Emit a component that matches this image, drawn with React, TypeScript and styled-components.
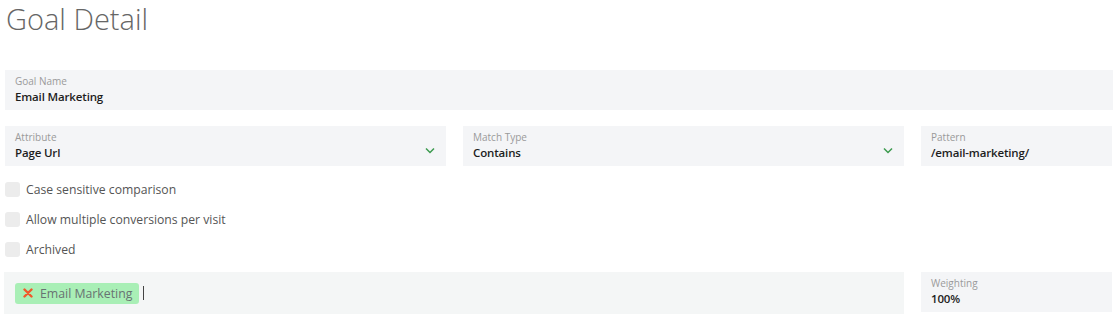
import styled, { createGlobalStyle } from 'styled-components'

const GlobalStyle = createGlobalStyle`
  body {
    margin: 0;
    background: #ffffff;
    font-family: "Open Sans", "Noto Sans", sans-serif;
  }
`

const Page = styled.div`
  padding: 0 0 0 5px;
  width: 1108px;
`

const Title = styled.h1`
  margin: 0;
  padding: 0 0 0 1px;
  font-size: 29px;
  font-weight: 300;
  line-height: 38px;
  color: #666666;
  height: 70px;
`

const Field = styled.div`
  background: #f4f5f7;
  height: 40px;
  padding: 5px 10px 0;
  box-sizing: border-box;
  display: flex;
  align-items: flex-start;
  justify-content: space-between;
`

const FieldText = styled.div`
  display: flex;
  flex-direction: column;
`

const Label = styled.span`
  font-size: 10px;
  line-height: 13px;
  color: #9a9a9a;
`

const Value = styled.span`
  font-size: 11.5px;
  line-height: 17px;
  font-weight: 600;
  letter-spacing: -0.15px;
  color: #1d1d1d;
`

const Row = styled.div`
  display: grid;
  grid-template-columns: 441px 441px 191px;
  column-gap: 17px;
  margin-top: 16px;
`

const BottomRow = styled.div`
  display: grid;
  grid-template-columns: 900px 191px;
  column-gap: 17px;
  margin-left: -1px;
`

const Chevron = styled.svg`
  margin-top: 16px;
  margin-right: 1px;
`

const Checks = styled.div`
  display: flex;
  flex-direction: column;
  gap: 14px;
  padding: 15px 0 15px;
`

const CheckRow = styled.label`
  display: flex;
  align-items: center;
  gap: 6px;
  height: 16px;
  font-size: 12.2px;
  color: #555555;
`

const Box = styled.span`
  width: 15px;
  height: 15px;
  border-radius: 3px;
  background: #ececec;
`

const TagArea = styled.div`
  background: #f4f6f6;
  height: 42px;
  display: flex;
  align-items: center;
  padding: 0 11px;
  gap: 4px;
`

const Tag = styled.span`
  display: inline-flex;
  align-items: center;
  gap: 7px;
  height: 21px;
  padding: 0 7px 0 8px;
  border-radius: 3px;
  background: #a9efb6;
  color: #687272;
  font-size: 12.3px;
`

const Caret = styled.span`
  width: 1px;
  height: 14px;
  background: #444;
`

const ChevronIcon = () => (
  <Chevron width="10" height="7" viewBox="0 0 10 7">
    <path d="M1 1.5 L5 5.5 L9 1.5" fill="none" stroke="#3c9a4e" strokeWidth="1.5" />
  </Chevron>
)

const App = () => {
  return (
    <Page>
      <GlobalStyle />
      <Title>Goal Detail</Title>
      <Field>
        <FieldText>
          <Label>Goal Name</Label>
          <Value>Email Marketing</Value>
        </FieldText>
      </Field>
      <Row>
        <Field>
          <FieldText>
            <Label>Attribute</Label>
            <Value>Page Url</Value>
          </FieldText>
          <ChevronIcon />
        </Field>
        <Field>
          <FieldText>
            <Label>Match Type</Label>
            <Value>Contains</Value>
          </FieldText>
          <ChevronIcon />
        </Field>
        <Field>
          <FieldText>
            <Label>Pattern</Label>
            <Value>/email-marketing/</Value>
          </FieldText>
        </Field>
      </Row>
      <Checks>
        <CheckRow><Box />Case sensitive comparison</CheckRow>
        <CheckRow><Box />Allow multiple conversions per visit</CheckRow>
        <CheckRow><Box />Archived</CheckRow>
      </Checks>
      <BottomRow>
        <TagArea>
          <Tag>
            <svg width="10" height="10" viewBox="0 0 10 10">
              <path d="M1.5 1.5 L8.5 8.5 M8.5 1.5 L1.5 8.5" stroke="#f0582a" strokeWidth="2.4" strokeLinecap="round" />
            </svg>
            Email Marketing
          </Tag>
          <Caret />
        </TagArea>
        <Field>
          <FieldText>
            <Label>Weighting</Label>
            <Value>100%</Value>
          </FieldText>
        </Field>
      </BottomRow>
    </Page>
  )
}

export default App
